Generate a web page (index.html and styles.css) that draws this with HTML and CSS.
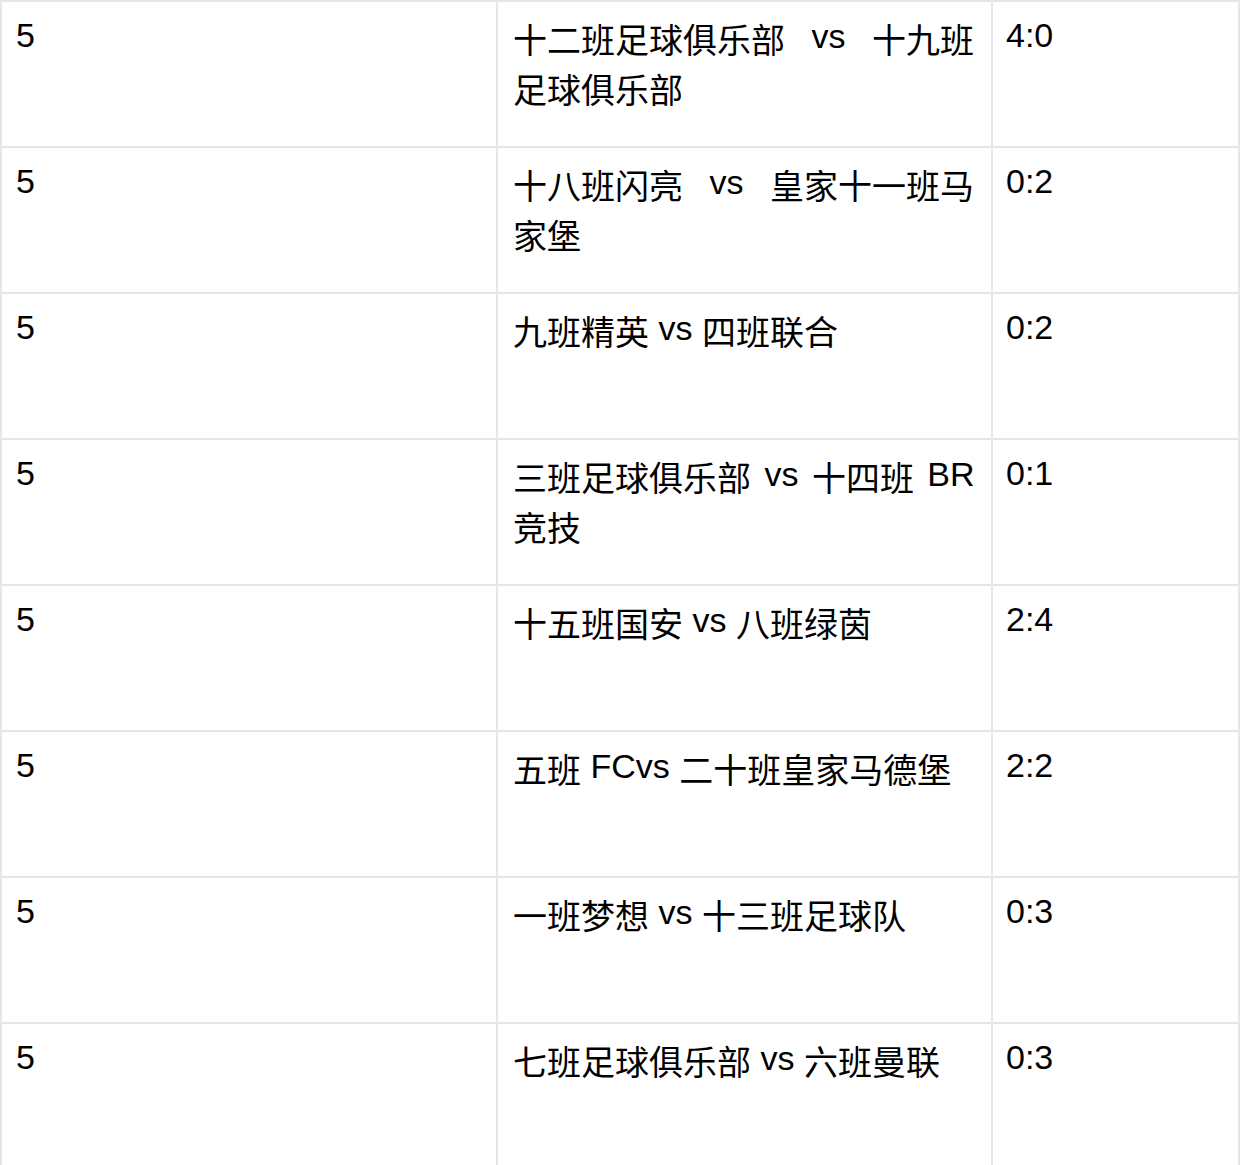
FILE: index.html
```html
<!DOCTYPE html>
<html lang="zh-CN">
<head>
<meta charset="utf-8">
<title>比赛结果</title>
<link rel="stylesheet" href="styles.css">
</head>
<body>
<div class="results">
  <div class="cell round">5</div>
  <div class="cell match wide">十二班足球俱乐部 <span class="lat">vs</span> 十九班<wbr>足球俱乐部</div>
  <div class="cell score">4:0</div>

  <div class="cell round">5</div>
  <div class="cell match wide">十八班闪亮 <span class="lat">vs</span> 皇家十一班马<wbr>家堡</div>
  <div class="cell score">0:2</div>

  <div class="cell round">5</div>
  <div class="cell match">九班精英 <span class="lat">vs</span> 四班联合</div>
  <div class="cell score">0:2</div>

  <div class="cell round">5</div>
  <div class="cell match snug">三班足球俱乐部 <span class="lat">vs</span> 十四班 <span class="lat">BR</span>竞技</div>
  <div class="cell score">0:1</div>

  <div class="cell round">5</div>
  <div class="cell match">十五班国安 <span class="lat">vs</span> 八班绿茵</div>
  <div class="cell score">2:4</div>

  <div class="cell round">5</div>
  <div class="cell match">五班 <span class="lat">FCvs</span> 二十班皇家马德堡</div>
  <div class="cell score">2:2</div>

  <div class="cell round">5</div>
  <div class="cell match">一班梦想 <span class="lat">vs</span> 十三班足球队</div>
  <div class="cell score">0:3</div>

  <div class="cell round">5</div>
  <div class="cell match">七班足球俱乐部 <span class="lat">vs</span> 六班曼联</div>
  <div class="cell score">0:3</div>
</div>
</body>
</html>
```

FILE: styles.css
```css
html, body {
  margin: 0;
  padding: 0;
  background: #ffffff;
}

body {
  font-family: "Liberation Sans", "Noto Sans CJK SC", sans-serif;
  color: #000000;
}

.results {
  display: grid;
  grid-template-columns: 496px 495px 247px;
  grid-auto-rows: 146px;
  border-top: 2px solid #e6e6e9;
  border-left: 2px solid #e6e6e9;
  width: 1240px;
  box-sizing: border-box;
}

.cell {
  box-sizing: border-box;
  border-right: 2px solid #e6e6e9;
  border-bottom: 2px solid #e6e6e9;
  padding: 14px 15px 0 14px;
  font-size: 34px;
  line-height: 50px;
  overflow: hidden;
}

.round {
  padding-top: 8px;
}

.match {
  padding-left: 15px;
}

.score {
  padding-top: 8px;
  padding-left: 13px;
}

.lat {
  line-height: 34px;
  vertical-align: 5px;
}

.wide {
  word-spacing: 17px;
}

.snug {
  word-spacing: 4px;
}
```
